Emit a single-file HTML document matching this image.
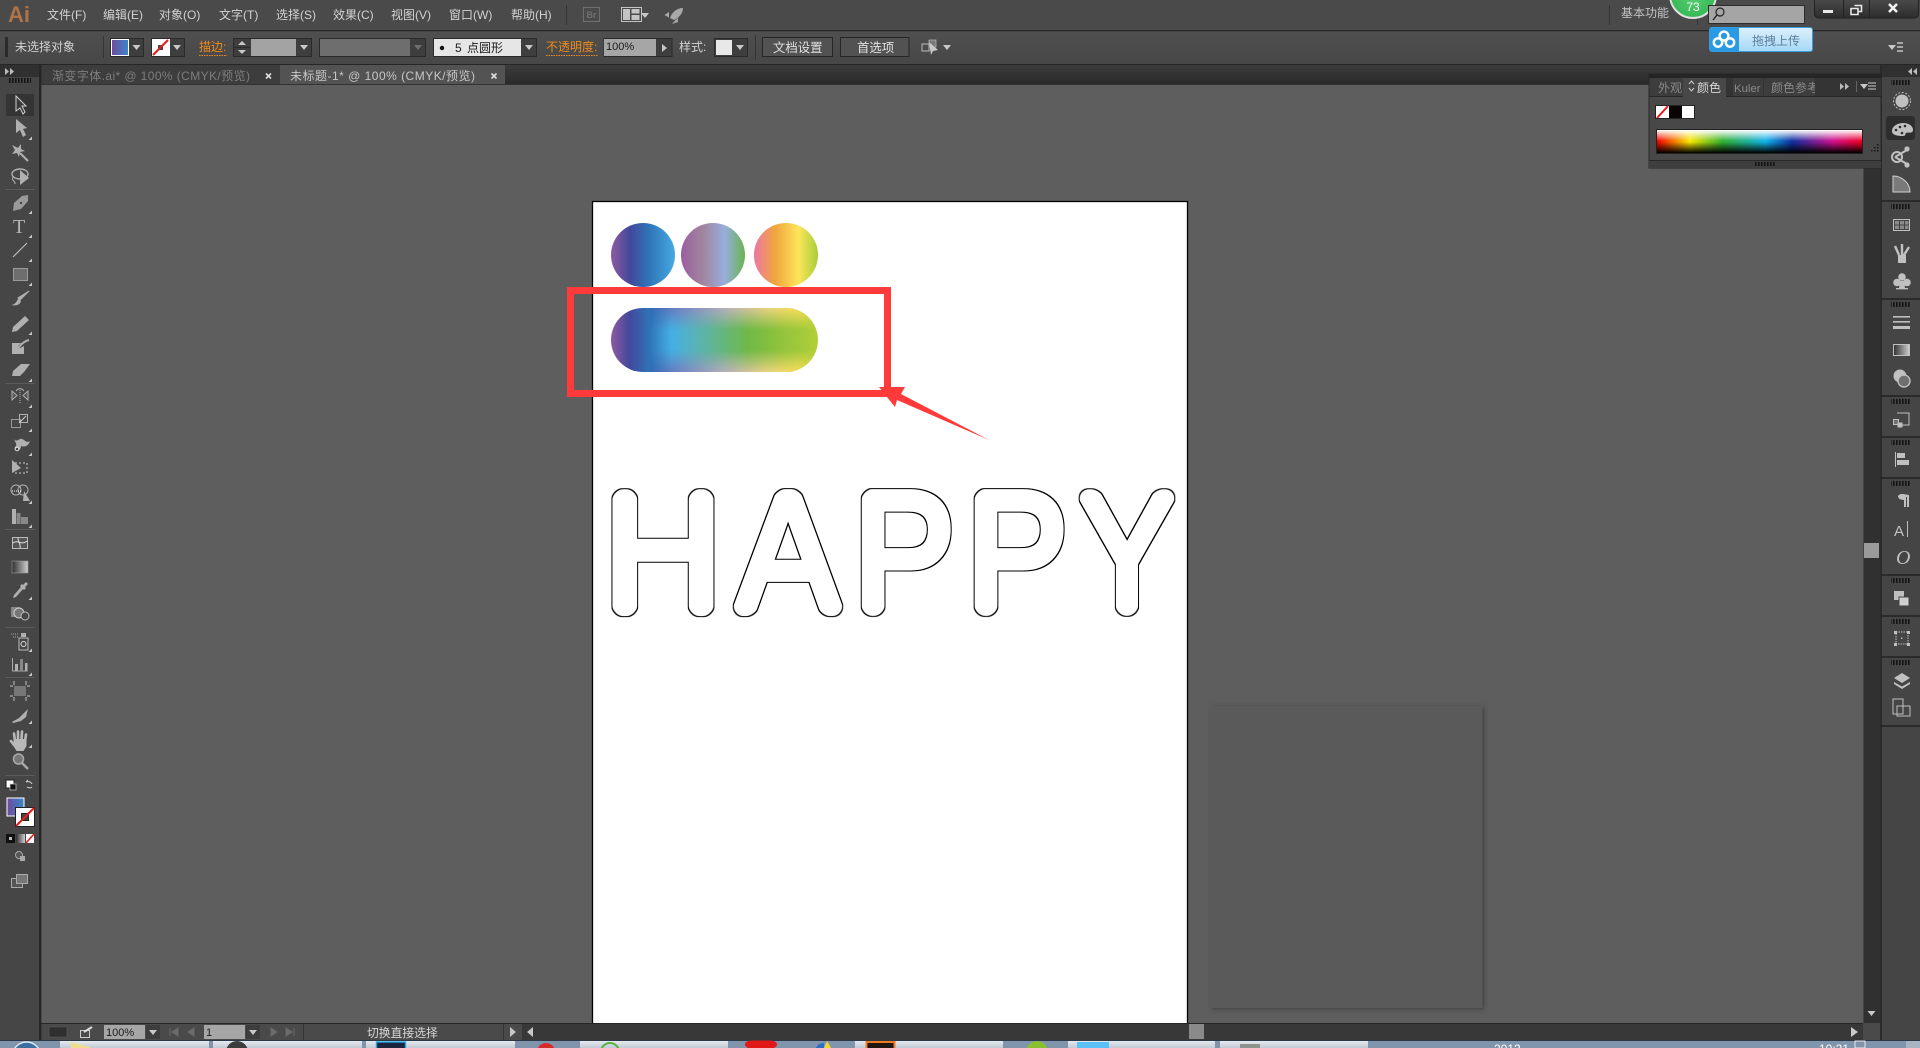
<!DOCTYPE html>
<html><head><meta charset="utf-8"><title>Ai</title>
<style>
html,body{margin:0;padding:0;background:#5e5e5e;width:1920px;height:1048px;overflow:hidden}
svg{display:block;position:absolute;left:0;top:0}
text{font-family:"Liberation Sans","Noto Sans CJK SC",sans-serif;font-size:12px;fill:#d2d2d2}
.d{fill:#8b8b8b}.o{fill:#f08a1c}.k{fill:#1c1c1c}
.hp{font-size:164px;fill:#000;stroke:#000;stroke-width:9.4px;stroke-linejoin:round}
</style></head><body>
<svg width="1920" height="1048" viewBox="0 0 1920 1048" xmlns="http://www.w3.org/2000/svg">
<defs>
<polygon id="t" points="-4,-2 4,-2 0,3" fill="#c8c8c8"/>
<polygon id="c" points="3,0 3,-3.5 -0.5,0" fill="#c8c8c8"/>
<pattern id="g" width="3" height="6" patternUnits="userSpaceOnUse"><rect width="1.6" height="6" fill="#141414"/></pattern>
<linearGradient id="tb" x1="0" y1="0" x2="0" y2="1"><stop offset="0" stop-color="#3b3b3b"/><stop offset="1" stop-color="#2b2b2b"/></linearGradient>
<linearGradient id="ct" x1="0" y1="0" x2="0" y2="1"><stop offset="0" stop-color="#4f4f4f"/><stop offset="1" stop-color="#474747"/></linearGradient>
<linearGradient id="win" x1="0" y1="0" x2="0" y2="1"><stop offset="0" stop-color="#505050"/><stop offset="1" stop-color="#2c2c2c"/></linearGradient>
<linearGradient id="fs" x1="0" y1="0" x2="1" y2="0"><stop offset="0" stop-color="#6f4c9f"/><stop offset="1" stop-color="#3a86c8"/></linearGradient>
<linearGradient id="gr" x1="0" y1="0" x2="1" y2="0"><stop offset="0" stop-color="#303030"/><stop offset="1" stop-color="#cfcfcf"/></linearGradient>
<linearGradient id="g1"><stop offset="0" stop-color="#8f5aa0"/><stop offset=".3" stop-color="#42489c"/><stop offset=".6" stop-color="#2f76b8"/><stop offset="1" stop-color="#45aae2"/></linearGradient>
<linearGradient id="g2"><stop offset="0" stop-color="#9a5d9f"/><stop offset=".35" stop-color="#a0869f"/><stop offset=".68" stop-color="#98aede"/><stop offset="1" stop-color="#68b450"/></linearGradient>
<linearGradient id="g3"><stop offset="0" stop-color="#ec76a4"/><stop offset=".33" stop-color="#f0a63e"/><stop offset=".7" stop-color="#fde55a"/><stop offset="1" stop-color="#a6ce38"/></linearGradient>
<linearGradient id="p1"><stop offset="0" stop-color="#8f5aa0"/><stop offset=".09" stop-color="#42489c"/><stop offset=".19" stop-color="#2f76b8"/><stop offset=".29" stop-color="#45aee4"/><stop offset=".42" stop-color="#5ab3b4"/><stop offset=".66" stop-color="#6fb948"/><stop offset=".82" stop-color="#90c33c"/><stop offset="1" stop-color="#b2d03a"/></linearGradient>
<linearGradient id="p2"><stop offset="0" stop-color="#2f6ab4"/><stop offset=".15" stop-color="#6a7fc2"/><stop offset=".45" stop-color="#b6b0b8"/><stop offset=".7" stop-color="#e8d27e"/><stop offset=".88" stop-color="#f8dc58"/><stop offset="1" stop-color="#d8d84a"/></linearGradient>
<linearGradient id="pm" x1="0" y1="0" x2="0" y2="1"><stop offset="0" stop-color="#fff"/><stop offset=".34" stop-color="#000"/><stop offset=".66" stop-color="#000"/><stop offset="1" stop-color="#fff"/></linearGradient>
<mask id="pmask" maskUnits="userSpaceOnUse" x="611" y="308" width="207" height="64"><rect x="611" y="308" width="207" height="64" fill="url(#pm)"/></mask>
<clipPath id="pc"><rect x="611" y="308" width="207" height="64" rx="32"/></clipPath>
<linearGradient id="hue"><stop offset="0" stop-color="#f00000"/><stop offset=".16" stop-color="#f6e600"/><stop offset=".32" stop-color="#30b030"/><stop offset=".53" stop-color="#10b0e8"/><stop offset=".66" stop-color="#1030a0"/><stop offset=".86" stop-color="#d0108c"/><stop offset="1" stop-color="#ee0020"/></linearGradient>
<linearGradient id="sv" x1="0" y1="0" x2="0" y2="1"><stop offset="0" stop-color="#fff"/><stop offset=".48" stop-color="#fff" stop-opacity="0"/><stop offset=".52" stop-color="#000" stop-opacity="0"/><stop offset="1" stop-color="#000"/></linearGradient>
<linearGradient id="up" x1="0" y1="0" x2="0" y2="1"><stop offset="0" stop-color="#dcf0fc"/><stop offset="1" stop-color="#a6d8f8"/></linearGradient>
<linearGradient id="tk" x1="0" y1="0" x2="0" y2="1"><stop offset="0" stop-color="#e6eaef"/><stop offset="1" stop-color="#c2cad4"/></linearGradient>
<radialGradient id="gc"><stop offset="0" stop-color="#58d070"/><stop offset="1" stop-color="#38b858"/></radialGradient>
<filter id="sh" x="-5%" y="-5%" width="110%" height="110%"><feGaussianBlur stdDeviation="2"/></filter>
<filter id="happy" x="560" y="460" width="660" height="180" filterUnits="userSpaceOnUse" color-interpolation-filters="sRGB">
<feGaussianBlur in="SourceAlpha" stdDeviation="8" result="b"/>
<feComponentTransfer in="b" result="r"><feFuncA type="linear" slope="24" intercept="-9.8"/></feComponentTransfer>
<feComposite in="r" in2="SourceAlpha" operator="in" result="s"/>
<feMorphology in="s" operator="dilate" radius="1" result="d"/>
<feComposite in="d" in2="s" operator="out"/>
</filter>
</defs>

<!-- canvas -->
<rect width="1920" height="1048" fill="#5e5e5e"/>
<rect x="1212" y="707" width="272" height="302" fill="#333" opacity=".7" filter="url(#sh)"/>
<rect x="1210.500" y="706" width="272" height="302" fill="#5a5a5a"/>
<!-- artboard -->
<rect x="592.5" y="201.5" width="595" height="830" fill="#fff" stroke="#000" stroke-width="1.3"/>
<circle cx="643" cy="255" r="32" fill="url(#g1)"/>
<circle cx="713" cy="255" r="32" fill="url(#g2)"/>
<circle cx="786" cy="255" r="32" fill="url(#g3)"/>
<g clip-path="url(#pc)"><rect x="611" y="308" width="207" height="64" fill="url(#p1)"/><rect x="650" y="308" width="168" height="64" fill="url(#p2)" mask="url(#pmask)"/></g>
<g filter="url(#happy)" aria-label="HAPPY">
<text class="hp" transform="translate(603.7 611.3) scale(1 1.04)">H</text>
<text class="hp" transform="translate(736 611.3) scale(.95 1.04)">A</text>
<text class="hp" transform="translate(853.7 611.3) scale(.92 1.04)">P</text>
<text class="hp" transform="translate(966.6 611.3) scale(.92 1.04)">P</text>
<text class="hp" transform="translate(1077.8 611.3) scale(.9 1.04)">Y</text>
</g>
<!-- annotation -->
<rect x="570.5" y="290.5" width="317" height="103" fill="none" stroke="#ff3a3a" stroke-width="7"/>
<polygon points="879,387 905,387 901,394 989,440 897,400 895,407" fill="#ff3a3a"/>

<!-- menu bar -->
<rect width="1920" height="30" fill="#4a4a4a"/><rect y="30" width="1920" height="1.5" fill="#282828"/>
<text x="8" y="22" style="font-size:22px;font-weight:bold;fill:#ae7448">Ai</text>
<text x="47" y="19">文件(F)</text><text x="103" y="19">编辑(E)</text><text x="159" y="19">对象(O)</text><text x="219" y="19">文字(T)</text><text x="276" y="19">选择(S)</text><text x="333" y="19">效果(C)</text><text x="391" y="19">视图(V)</text><text x="449" y="19">窗口(W)</text><text x="511" y="19">帮助(H)</text>
<rect x="566" y="5" width="1" height="20" fill="#353535"/>
<rect x="583.5" y="7.5" width="16" height="14" fill="none" stroke="#707070"/><text x="586.5" y="18" style="font-size:9px;font-weight:bold;fill:#707070">Br</text>
<g fill="#c4c4c4"><rect x="621.5" y="7.5" width="20" height="14" fill="none" stroke="#c4c4c4"/><rect x="623" y="9" width="7" height="11"/><rect x="631.5" y="9" width="8" height="4.5"/><rect x="631.5" y="15" width="8" height="5"/></g>
<use href="#t" x="645" y="15"/>
<g fill="#a8a8a8"><path d="M683,8 C677,8 672,12 670,18 L674,20 C679,18 683,13 683,8Z"/><path d="M669,12 L664.5,15 L669,17.500Z"/><path d="M675,20.500 L672,24 L678,22 L678,18Z"/></g>
<rect x="1609" y="5" width="1" height="20" fill="#353535"/><rect x="1697" y="5" width="1" height="20" fill="#353535"/>
<text x="1621" y="17" style="fill:#c4c4c4">基本功能</text>
<circle cx="1693" cy="-5" r="23" fill="url(#gc)" stroke="#e0e0e0" stroke-width="2"/>
<text x="1693" y="11" text-anchor="middle" style="font-size:12px;fill:#fff">73</text>
<rect x="1708.5" y="5.5" width="96" height="18" fill="#a5a5a5" stroke="#2c2c2c"/>
<circle cx="1720" cy="12" r="4" fill="none" stroke="#222" stroke-width="1.2"/><path d="M1717,15 L1713,20" stroke="#222" stroke-width="1.4"/>
<rect x="1814.5" y="-4" width="104" height="22" rx="4" fill="url(#win)" stroke="#222"/>
<rect x="1843" y="0" width="1" height="18" fill="#222"/><rect x="1869" y="0" width="1" height="18" fill="#222"/>
<rect x="1823" y="10" width="10" height="3" fill="#e8e8e8"/>
<path d="M1851,8.5h7v6h-7z M1854.5,5.5h7v6h-3" fill="none" stroke="#e8e8e8" stroke-width="1.6"/>
<path d="M1889,4 L1897,12 M1897,4 L1889,12" stroke="#f0f0f0" stroke-width="2.6"/>

<!-- control bar -->
<rect y="32" width="1920" height="32" fill="url(#ct)"/><rect y="64" width="1920" height="1.2" fill="#262626"/>
<rect x="5" y="37" width="3" height="20" fill="#1c1c1c" opacity=".7"/>
<text x="15" y="51">未选择对象</text>
<rect x="103" y="36" width="1" height="22" fill="#353535"/>
<rect x="110.5" y="38.5" width="33" height="18" fill="#3e3e3e" stroke="#2a2a2a"/><rect x="111" y="39" width="18" height="17" fill="#fff"/><rect x="112" y="40" width="16" height="15" fill="url(#fs)"/><use href="#t" x="136.5" y="47"/>
<rect x="151.5" y="38.5" width="33" height="18" fill="#3e3e3e" stroke="#2a2a2a"/><rect x="152" y="39" width="18" height="17" fill="#fff"/><rect x="158" y="45" width="5" height="5" fill="#444"/><path d="M153,55 L168,40" stroke="#e81c1c" stroke-width="2"/><use href="#t" x="177" y="47"/>
<text x="199" y="51" class="o" style="font-size:12px">描边:</text><path d="M199,55.5H227" stroke="#f08a1c" stroke-dasharray="1.5 1"/>
<rect x="233.5" y="38.5" width="78" height="18" fill="#3e3e3e" stroke="#2a2a2a"/><rect x="234" y="47" width="16" height="1" fill="#2a2a2a"/><polygon points="242,41 246,45 238,45" fill="#c8c8c8"/><polygon points="242,54 246,50 238,50" fill="#c8c8c8"/><rect x="251" y="39" width="45" height="17" fill="#a3a3a3"/><use href="#t" x="304" y="47"/>
<rect x="319.5" y="38.5" width="106" height="18" fill="#3e3e3e" stroke="#2a2a2a"/><rect x="320" y="39" width="90" height="17" fill="#6e6e6e"/><polygon points="414,45 422,45 418,50" fill="#6e6e6e"/>
<rect x="433.5" y="38.5" width="103" height="18" fill="#3e3e3e" stroke="#2a2a2a"/><rect x="434" y="39" width="87" height="17" fill="#e6e6e6"/><circle cx="442" cy="48" r="2.2" fill="#111"/><text x="455" y="52" class="k">5</text><text x="467" y="52" class="k">点圆形</text><use href="#t" x="529" y="47"/>
<text x="546" y="51" class="o" style="font-size:12px">不透明度:</text><path d="M546,55.5H598" stroke="#f08a1c" stroke-dasharray="1.5 1"/>
<rect x="604" y="38.5" width="68" height="18" fill="#3e3e3e" stroke="#2a2a2a"/><rect x="604" y="39" width="52" height="17" fill="#a6a6a6"/><text x="606" y="50" class="k" style="font-size:11px">100%</text><polygon points="662,44 662,52 667,48" fill="#c8c8c8"/>
<text x="679" y="51">样式:</text>
<rect x="714.5" y="38.5" width="33" height="18" fill="#3e3e3e" stroke="#2a2a2a"/><rect x="716" y="40" width="16" height="15" fill="#e8e8e8"/><use href="#t" x="740" y="47"/>
<rect x="755" y="35" width="1" height="25" fill="#353535"/>
<rect x="762.5" y="37.5" width="70" height="19" fill="#525252" stroke="#262626"/><text x="773" y="52" style="font-size:12.4px;fill:#e0e0e0">文档设置</text>
<rect x="840.5" y="37.5" width="68.5" height="19" fill="#525252" stroke="#262626"/><text x="857" y="52" style="font-size:12.4px;fill:#e0e0e0">首选项</text>
<rect x="922" y="44" width="7" height="7" fill="none" stroke="#bbb"/><rect x="929" y="40" width="7" height="7" fill="#777" stroke="#bbb" stroke-width=".7"/><polygon points="929,42 938,50 933,51 931,55" fill="#c8c8c8"/><use href="#t" x="947" y="47"/>
<use href="#t" x="1892" y="47"/><path d="M1897,43h6M1897,47h6M1897,51h6" stroke="#c4c4c4" stroke-width="1.4"/>

<!-- tab bar -->
<rect y="65" width="1920" height="19" fill="url(#tb)"/>
<rect x="41" y="65" width="239" height="19" fill="#3d3d3d"/>
<text x="52" y="80" textLength="198" lengthAdjust="spacing" style="fill:#7d7d7d">渐变字体.ai* @ 100% (CMYK/预览)</text>
<path d="M266,73.500l5,5m0-5l-5,5" stroke="#ddd" stroke-width="1.6"/>
<rect x="280" y="65" width="225" height="19" fill="#535353"/>
<text x="290" y="80" textLength="185" lengthAdjust="spacing" style="fill:#c6c6c6">未标题-1* @ 100% (CMYK/预览)</text>
<path d="M491.500,73.500l5,5m0-5l-5,5" stroke="#ddd" stroke-width="1.6"/>
<rect x="41" y="84" width="1840" height="1" fill="#333"/>

<!-- upload button -->
<rect x="1709.5" y="27.5" width="103" height="24" rx="2.5" fill="url(#up)" stroke="#3a9ee0"/>
<path d="M1712,27.5h27v24h-27a2.5,2.5 0 0 1 -2.5,-2.5v-19a2.5,2.5 0 0 1 2.5,-2.5z" fill="#2a9be2"/>
<g fill="none" stroke="#fff" stroke-width="2.4"><circle cx="1724" cy="36" r="4.4"/><circle cx="1718" cy="42.5" r="4.2"/><circle cx="1730" cy="42.5" r="4.2"/></g>
<text x="1752" y="45" style="font-size:12px;fill:#5c7f9a">拖拽上传</text>

<!-- status bar -->
<rect x="41" y="1023" width="1839" height="17" fill="#383838"/><rect x="41" y="1023" width="1839" height="1" fill="#262626"/>
<rect x="41" y="1024" width="481" height="16" fill="#4a4a4a"/>
<rect x="49" y="1027" width="18" height="10" rx="2" fill="#2f2f2f" stroke="#5a5a5a" stroke-width=".6"/>
<rect x="80.5" y="1030.5" width="9" height="7" fill="none" stroke="#ccc"/><path d="M84,1032 L92,1027" stroke="#ddd" stroke-width="2"/>
<rect x="104" y="1025" width="41" height="14" fill="#a6a6a6"/><text x="106" y="1036" class="k" style="font-size:11px">100%</text><rect x="146" y="1025" width="14" height="14" fill="#3d3d3d"/><use href="#t" x="153" y="1032"/>
<path d="M170,1028v8M178,1028l-6,4 6,4zM194,1028l-6,4 6,4z" fill="#6b6b6b" stroke="#6b6b6b"/>
<rect x="204" y="1025" width="41" height="14" fill="#a6a6a6"/><text x="206" y="1036" class="k" style="font-size:11px">1</text><rect x="246" y="1025" width="14" height="14" fill="#3d3d3d"/><use href="#t" x="253" y="1032"/>
<path d="M271,1028l6,4 -6,4zM286,1028l6,4 -6,4zM294,1028v8" fill="#6b6b6b" stroke="#6b6b6b"/>
<rect x="303" y="1024" width="1" height="16" fill="#353535"/><rect x="503" y="1024" width="1" height="16" fill="#353535"/>
<text x="367" y="1037" style="font-size:11.8px;fill:#d8d8d8">切换直接选择</text>
<polygon points="510,1027 510,1037 516,1032" fill="#c8c8c8"/><polygon points="533,1027 533,1037 527,1032" fill="#c8c8c8"/>
<rect x="1189" y="1024" width="15" height="15" fill="#8a8a8a"/><polygon points="1851,1027 1851,1037 1858,1032" fill="#c8c8c8"/>

<!-- right scroll -->
<rect x="1863" y="168" width="17" height="855" fill="#303030"/><rect x="1863" y="168" width="1" height="855" fill="#444"/>
<rect x="1864" y="543" width="15" height="15" fill="#9a9a9a"/>
<use href="#t" x="1871.5" y="1013"/>
<rect x="1863" y="1023" width="17" height="17" fill="#4a4a4a"/>
<rect x="1880" y="65" width="40" height="975" fill="#2a2a2a"/>

<!-- right dock -->
<rect x="1882" y="65" width="38" height="12" fill="#303030"/>
<path d="M1912,68l-4,3.5 4,3.5zM1917,68l-4,3.5 4,3.5z" fill="#bcbcbc"/>
<g fill="#454545">
<rect x="1882" y="77" width="38" height="123"/><rect x="1882" y="202" width="38" height="96"/><rect x="1882" y="300" width="38" height="95"/><rect x="1882" y="397" width="38" height="39"/><rect x="1882" y="438" width="38" height="39"/><rect x="1882" y="479" width="38" height="95"/><rect x="1882" y="576" width="38" height="39"/><rect x="1882" y="617" width="38" height="39"/><rect x="1882" y="658" width="38" height="67"/><rect x="1882" y="727" width="38" height="313"/>
</g>
<g fill="url(#g)">
<rect x="1891" y="80" width="20" height="5"/><rect x="1891" y="204" width="20" height="5"/><rect x="1891" y="302" width="20" height="5"/><rect x="1891" y="399" width="20" height="5"/><rect x="1891" y="440" width="20" height="5"/><rect x="1891" y="481" width="20" height="5"/><rect x="1891" y="578" width="20" height="5"/><rect x="1891" y="619" width="20" height="5"/><rect x="1891" y="660" width="20" height="5"/>
</g>
<rect x="1886" y="116" width="29" height="24" rx="3" fill="#2e2e2e"/>
<g fill="#c0c0c0" stroke="none">
<circle cx="1902" cy="101" r="6.5"/><circle cx="1902" cy="101" r="8.5" fill="none" stroke="#c0c0c0" stroke-dasharray="2 1.6"/>
<path d="M1892,131c0-5 6-8 11-8 6 0 10 3 10 7 0 4-5 2-7 3-1 1 0 3-3 3-6 0-11-1-11-5z"/><g fill="#2e2e2e"><circle cx="1896" cy="130" r="1.3"/><circle cx="1900" cy="127" r="1.3"/><circle cx="1905" cy="126" r="1.3"/><circle cx="1902" cy="133" r="1.3"/></g>
<circle cx="1897" cy="157" r="5" fill="none" stroke="#c0c0c0" stroke-width="2"/><path d="M1895,157 L1907,150 M1895,157 L1907,164" stroke="#c0c0c0" stroke-width="2"/><circle cx="1907" cy="149" r="2.6"/><circle cx="1907" cy="165" r="2.6"/>
<path d="M1893,176 C1902,176 1910,183 1910,192 L1893,192Z" fill="#7a7a7a" stroke="#d0d0d0"/>
<rect x="1893.5" y="219.5" width="16" height="11" fill="none" stroke="#c0c0c0"/><rect x="1895" y="221" width="4" height="3.5" fill="#8a8a8a"/><rect x="1900" y="221" width="4" height="3.5" fill="#8a8a8a"/><rect x="1905" y="221" width="3.5" height="3.5" fill="#8a8a8a"/><rect x="1895" y="225.5" width="4" height="3.5" fill="#8a8a8a"/><rect x="1900" y="225.5" width="4" height="3.5" fill="#8a8a8a"/><rect x="1905" y="225.5" width="3.5" height="3.5" fill="#8a8a8a"/>
<rect x="1898" y="255" width="8" height="8"/><path d="M1899,255 L1895,246 M1902,255 L1902,244 M1904,255 L1909,247" stroke="#c0c0c0" stroke-width="2.4"/>
<circle cx="1902" cy="277" r="3.8"/><circle cx="1897" cy="282.5" r="3.8"/><circle cx="1907" cy="282.5" r="3.8"/><path d="M1900,281h4l1,7h-6zM1896,288h12v1.4h-12z"/>
<rect x="1893" y="316" width="17" height="1.6"/><rect x="1893" y="321" width="17" height="1.6"/><rect x="1893" y="326" width="17" height="3"/>
<rect x="1893.5" y="344.5" width="16" height="11" fill="url(#gr)" stroke="#c0c0c0"/>
<circle cx="1900" cy="376" r="6.5"/><circle cx="1904" cy="381" r="6" fill="#707070" stroke="#c0c0c0" stroke-width="1.4"/>
<path d="M1897,413h12v12h-8" fill="none" stroke="#c0c0c0" stroke-width="1"/><rect x="1893.5" y="419.5" width="5" height="5" fill="#707070" stroke="#c0c0c0"/><rect x="1897.5" y="422.5" width="5" height="5" fill="#c0c0c0"/>
<rect x="1895" y="452" width="1" height="15"/><rect x="1897" y="453" width="8" height="5"/><rect x="1897" y="460" width="12" height="5"/>
<path d="M1909,495v12h-2v-10h-1v10h-2v-7c-4,0-6-2-6-3.5 0-1.5 2-2.5 5-2.5z"/>
<text x="1894" y="536" style="font-size:15px;fill:#c0c0c0">A</text><rect x="1907" y="521" width="1" height="16"/>
<text x="1896" y="564" style="font-family:'Liberation Serif',serif;font-size:20px;font-style:italic;fill:#c0c0c0">O</text>
<rect x="1894" y="591" width="10" height="9"/><rect x="1899" y="597" width="10" height="9" fill="#d0d0d0" stroke="#454545"/>
<rect x="1896" y="632" width="12" height="12" fill="none" stroke="#c0c0c0" stroke-dasharray="1.5 1"/><rect x="1894" y="631" width="3" height="3"/><rect x="1907" y="631" width="3" height="3"/><rect x="1894" y="643" width="3" height="3"/><rect x="1907" y="643" width="3" height="3"/><rect x="1901" y="637.5" width="1.4" height="1.4"/>
<path d="M1902,673l8,5 -8,5 -8,-5z"/><path d="M1894,682l8,4.5 8,-4.5 0,2 -8,5 -8,-5z"/>
<path d="M1893,699h10v15h-10z M1897,706h13v10h-13z" fill="#454545" stroke="#c0c0c0"/>
</g>

<!-- color panel -->
<rect x="1649" y="74" width="232" height="94" fill="#484848" stroke="#282828"/>
<rect x="1649" y="74" width="232" height="4" fill="#252525"/>
<rect x="1649" y="78" width="232" height="18" fill="#343434"/><rect x="1649" y="96" width="232" height="1" fill="#282828"/>
<rect x="1650" y="78" width="33" height="18" fill="#3d3d3d"/><rect x="1683" y="78" width="43" height="19" fill="#484848"/><rect x="1733" y="78" width="30" height="18" fill="#3d3d3d"/><rect x="1764" y="78" width="51" height="18" fill="#3d3d3d"/>
<text x="1658" y="92" style="font-size:12px;fill:#8a8a8a">外观</text>
<path d="M1689,84l2.5-3 2.5,3M1689,88l2.5,3 2.5-3" fill="none" stroke="#ccc"/>
<text x="1697" y="92" style="fill:#d8d8d8">颜色</text>
<text x="1734" y="92" style="font-size:11.4px;fill:#8a8a8a">Kuler</text>
<text x="1771" y="92" style="fill:#8a8a8a">颜色参考</text>
<rect x="1815" y="78" width="66" height="18" fill="#343434"/>
<path d="M1840,83v7l4-3.5zM1845,83v7l4-3.5z" fill="#bbb"/><rect x="1856" y="81" width="1" height="11" fill="#666"/>
<use href="#t" x="1864" y="86"/><path d="M1868,83h8M1868,86h8M1868,89h8" stroke="#ccc"/>
<rect x="1655.5" y="105.5" width="39" height="13" fill="none" stroke="#222"/><rect x="1656" y="106" width="13" height="12" fill="#fff"/><path d="M1657,118 L1668,106" stroke="#e81c1c" stroke-width="2"/><rect x="1669" y="106" width="13" height="12" fill="#0a0505"/><rect x="1682" y="106" width="12" height="12" fill="#fff"/>
<rect x="1656.5" y="129.5" width="206" height="24" fill="#222" stroke="#222"/>
<rect x="1657" y="130" width="205" height="23" fill="url(#hue)"/><rect x="1657" y="130" width="205" height="23" fill="url(#sv)"/>
<g fill="#141414"><rect x="1877" y="150" width="1.5" height="1.5"/><rect x="1874" y="150" width="1.5" height="1.5"/><rect x="1871" y="150" width="1.5" height="1.5"/><rect x="1877" y="147" width="1.5" height="1.5"/><rect x="1874" y="147" width="1.5" height="1.5"/><rect x="1877" y="144" width="1.5" height="1.5"/></g>
<rect x="1649" y="160" width="232" height="8" fill="#3e3e3e"/><rect x="1649" y="160" width="232" height="1" fill="#282828"/>
<rect x="1755" y="162" width="20" height="4" fill="url(#g)"/>

<!-- left tools panel -->
<rect x="0" y="65" width="39" height="12" fill="#303030"/>
<path d="M5,68l4,3.5 -4,3.5zM10,68l4,3.5 -4,3.5z" fill="#bcbcbc"/>
<rect x="0" y="77" width="39" height="963" fill="#464646"/>
<rect x="39" y="65" width="2.4" height="975" fill="#262626"/>
<rect x="9" y="78" width="22" height="5" fill="url(#g)"/>
<rect x="6" y="94" width="28" height="22" fill="#343434"/>
<g fill="#5c5c5c"><rect x="5" y="189" width="30" height="1"/><rect x="5" y="383" width="30" height="1"/><rect x="5" y="529" width="30" height="1"/><rect x="5" y="627" width="30" height="1"/><rect x="5" y="677" width="30" height="1"/><rect x="5" y="775" width="30" height="1"/></g>
<g fill="#c8c8c8">
<use href="#c" x="29" y="140"/><use href="#c" x="29" y="214"/><use href="#c" x="29" y="238"/><use href="#c" x="29" y="262"/><use href="#c" x="29" y="286"/><use href="#c" x="29" y="335"/><use href="#c" x="29" y="382"/><use href="#c" x="29" y="408"/><use href="#c" x="29" y="432"/><use href="#c" x="29" y="456"/><use href="#c" x="29" y="504"/><use href="#c" x="29" y="528"/><use href="#c" x="29" y="600"/><use href="#c" x="29" y="652"/><use href="#c" x="29" y="676"/><use href="#c" x="29" y="724"/><use href="#c" x="29" y="748"/>
</g>
<g fill="#b0b0b0" stroke="none">
<path d="M16,96 V111 L20,108 L23,114 L25,112 L22,106 L26,106Z" fill="#3a3a3a" stroke="#d0d0d0"/>
<path d="M16,119 V133 L20,130 L23,137 L26,135 L23,129 L27,128Z"/>
<path d="M18,148l-6-3 3,5-3,4 5-1 2,4 1-5 5-1-4-2 0-5z"/><path d="M20,153 L28,161" stroke="#b0b0b0" stroke-width="2"/>
<ellipse cx="20" cy="174" rx="8" ry="5" fill="none" stroke="#b0b0b0" stroke-width="1.4"/><path d="M13,177c-2,4 3,4 2,7" fill="none" stroke="#b0b0b0"/><path d="M20,170 L29,178 L20,185Z"/>
<path d="M28,195 L22,196 L14,203 L13,211 L21,209 L28,201Z" fill="#9a9a9a"/><circle cx="21" cy="203" r="1.2" fill="#464646"/>
<text x="13" y="233" style="font-family:'Liberation Serif',serif;font-size:20px;fill:#b4b4b4">T</text>
<path d="M13,257 L27,243" stroke="#b8b8b8" stroke-width="1.2"/>
<rect x="13.5" y="268.5" width="14" height="12" fill="#6e6e6e" stroke="#9a9a9a"/>
<path d="M29,291 L20,300 L18,298Z" stroke="#b0b0b0"/><path d="M11,305c3,0 5-2 7-6l3,2c-1,4-5,5-10,4z"/>
<path d="M25,316l4,4-12,11-5,1 1-5z"/>
<path d="M12,343h9l-3,3 2,2 4-2v8H12z"/><path d="M19,347c3-4 6-6 10-7" stroke="#b0b0b0" stroke-width="2" fill="none"/>
<path d="M13,371l8-7h9l-6,8-4,4h-8z"/>
<path d="M12,391v9l5-4.500zM28,391v9l-5-4.500z" stroke="#b0b0b0" fill="#555"/><path d="M20,388v16" stroke="#b0b0b0" stroke-dasharray="1 1"/><path d="M16,391c2-3 6-3 8,0" fill="none" stroke="#b0b0b0"/>
<rect x="11.500" y="419.500" width="9" height="8" fill="none" stroke="#999"/><rect x="19.500" y="414.500" width="8" height="8" fill="none" stroke="#b0b0b0"/><path d="M19,423 L26,416" stroke="#ccc"/>
<path d="M14,439c2,3 4,1 6,0 4-1 6,5 10,2-2,6-6,6-9,5 0,3-2,5-4,5-3-1-3-4-1-5 1-2-1-4-2-7z"/><circle cx="17" cy="449" r="1.800" fill="#464646" stroke="#ddd"/>
<rect x="15" y="463" width="12" height="10" fill="none" stroke="#ccc" stroke-dasharray="2 2"/><path d="M12,460 L21,468 L12,473Z"/>
<circle cx="16" cy="490" r="5" fill="none" stroke="#b0b0b0"/><circle cx="23" cy="490" r="5" fill="none" stroke="#b0b0b0"/><path d="M24,491 L30,501 L23,501Z"/><path d="M12,491h10" stroke="#fff" stroke-dasharray="1 1"/>
<rect x="12" y="509" width="4" height="15"/><rect x="16.500" y="513" width="4" height="11" fill="#888"/><rect x="21" y="517" width="7" height="7" fill="#888"/>
<rect x="12.500" y="537.500" width="15" height="11" fill="#555" stroke="#bbb"/><path d="M13,543c5-4 8,3 14-2M18,538c0,4 3,6 2,10" stroke="#ddd" fill="none"/>
<rect x="12" y="561" width="16" height="12" fill="url(#gr)" stroke="#999" stroke-width=".6"/>
<path d="M26,582l2,2-3,3 1,1-2,2-1-1-7,8-3,1 1-3 7-8-1-1 2-2 1,1z"/>
<rect x="11" y="607" width="9" height="10" fill="#888"/><circle cx="19" cy="613" r="5" fill="#777" stroke="#ccc"/><circle cx="25" cy="616" r="4" fill="#464646" stroke="#bbb"/>
<rect x="19" y="638" width="9" height="12" fill="none" stroke="#bbb"/><circle cx="23.500" cy="644" r="2.500" fill="none" stroke="#ddd"/><rect x="21" y="633" width="5" height="4"/><path d="M11,634h8M13,637h6" stroke="#aaa" stroke-dasharray="1 1"/>
<path d="M12.500,658v13h15" fill="none" stroke="#aaa"/><rect x="15" y="664" width="3" height="7"/><rect x="20" y="659" width="3" height="12" fill="#888"/><rect x="25" y="663" width="2.500" height="8"/>
<rect x="14" y="686" width="12" height="10" fill="#777"/><path d="M14,681v4M26,681v4M14,697v4M26,697v4M10,686h3M27,686h3M10,696h3M27,696h3" stroke="#c4c4c4"/>
<path d="M12,722l7-4 9-9-2,8-5,4-8,2z"/>
<path d="M15,741L14,733.500M18,740V731.500M21.500,740L22,731.500M25,741L26,734.500M14,745L11,741" stroke="#b8b8b8" stroke-width="2.600" stroke-linecap="round"/><path d="M13.500,739h13v7l-3,5h-7l-3-5z" fill="#b8b8b8"/>
<circle cx="18.500" cy="759" r="5" fill="#777" stroke="#aaa" stroke-width="1.500"/><path d="M22,763 L28,769" stroke="#aaa" stroke-width="2.400"/>
</g>
<!-- fill/stroke -->
<rect x="6" y="780" width="8" height="8" fill="#fff" stroke="#222"/><rect x="10" y="784" width="6" height="6" fill="#111" stroke="#ccc" stroke-width=".7"/>
<path d="M26,782c3,-1 5,0 6,2M26,782l2,-2M32,787c-1,1-3,1-5,0" fill="none" stroke="#ccc"/>
<rect x="6.500" y="797.500" width="18" height="19" fill="#fff"/><rect x="7.500" y="798.500" width="16" height="17" fill="url(#fs)"/>
<rect x="15.500" y="807.500" width="19" height="19" fill="#fff" stroke="#222"/><rect x="21.500" y="813.500" width="7" height="7" fill="#444" stroke="#222"/><path d="M16,826 L34,808" stroke="#e81c1c" stroke-width="2"/>
<rect x="6" y="834" width="9" height="9" fill="#111"/><rect x="9" y="837" width="3" height="3" fill="#bbb"/><rect x="16" y="834" width="9" height="9" fill="url(#gr)"/><rect x="26" y="834" width="8" height="9" fill="#fff"/><path d="M26,843 L34,834" stroke="#e81c1c" stroke-width="1.600"/>
<circle cx="19" cy="855" r="3.500" fill="#555" stroke="#aaa"/><rect x="20" y="856" width="5" height="5" fill="#aaa"/>
<rect x="11.500" y="878.500" width="11" height="9" fill="#555" stroke="#aaa"/><rect x="16.500" y="874.500" width="11" height="9" fill="#777" stroke="#aaa"/>

<!-- taskbar -->
<rect y="1040" width="1920" height="8" fill="#8094ac"/><rect y="1040" width="1920" height="1" fill="#2a3848"/>
<circle cx="26.500" cy="1056" r="14" fill="#3d6ea0" stroke="#dfe8f0" stroke-width="1.500"/>
<g fill="url(#tk)"><rect x="60" y="1041" width="149" height="7"/><rect x="213" y="1041" width="149" height="7"/><rect x="366" y="1041" width="149" height="7"/><rect x="580" y="1041" width="148" height="7"/><rect x="855" y="1041" width="148" height="7"/><rect x="1068" y="1041" width="147" height="7"/><rect x="1220" y="1041" width="148" height="7"/></g>
<rect x="1906" y="1041" width="14" height="7" fill="#a8b4c2"/>
<path d="M71,1048l0-6 19,5 0,1z" fill="#f0dc90"/>
<circle cx="237" cy="1052" r="11" fill="#3c3c3c"/>
<rect x="376.500" y="1042" width="29" height="8" fill="#1c2440" stroke="#22a8e0" stroke-width="1.400"/>
<circle cx="546" cy="1052" r="9" fill="#d82a2a"/>
<circle cx="610" cy="1052" r="9" fill="none" stroke="#58b040" stroke-width="2"/>
<rect x="745" y="1040.500" width="32" height="8" rx="7" fill="#e01818"/>
<path d="M816,1048c1-3 4-5 8-5l0,5z" fill="#2a6ec8"/><path d="M824,1048l3-7 4,7z" fill="#f4d82a"/>
<rect x="866.500" y="1042" width="28" height="7" fill="#201810" stroke="#f07a1c" stroke-width="2"/>
<circle cx="1037" cy="1052" r="11" fill="#88c030"/>
<rect x="1077" y="1042" width="32" height="7" fill="#5cc0f8"/>
<rect x="1240" y="1044" width="20" height="4" fill="#8c948c"/>
<text x="1494" y="1053" style="font-size:12px;fill:#fff">2012</text>
<text x="1819" y="1053" style="font-size:12px;fill:#fff">10:21</text>
<rect x="1855" y="1041" width="10" height="7" fill="none" stroke="#fff" stroke-width=".8"/>
</svg>
</body></html>
